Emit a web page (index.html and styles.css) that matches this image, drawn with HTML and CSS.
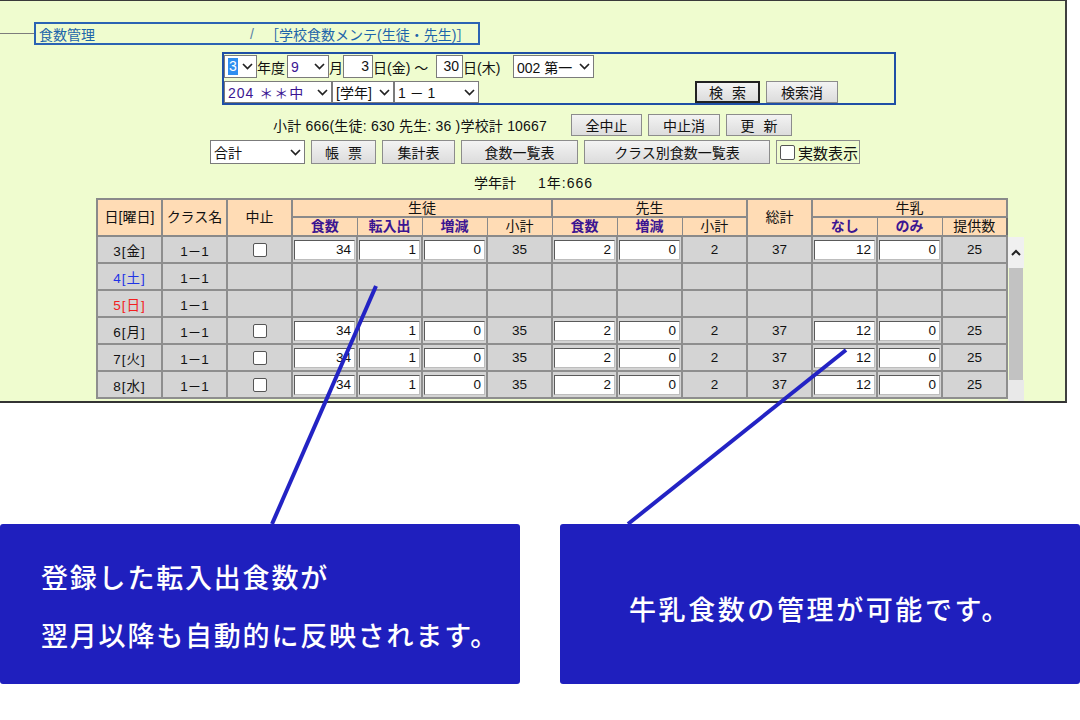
FILE: index.html
```html
<!DOCTYPE html>
<html lang="ja">
<head>
<meta charset="utf-8">
<title>食数管理</title>
<link rel="stylesheet" href="styles.css">
</head>
<body>
<div class="screen">
  <div class="crumb-row">
    <span class="crumb-line"></span>
    <div class="crumb"><span class="crumb-main">食数管理</span><span class="crumb-sep">/</span><span>［学校食数メンテ(生徒・先生)］</span></div>
  </div>

  <div class="search">
    <div class="srow srow1">
      <span class="sel w33"><span class="hl">3</span><svg viewBox="0 0 11 7"><path d="M1 1 L5.5 5.5 L10 1" /></svg></span>
      <span class="lbl w30">年度</span>
      <span class="sel w42 purple"><span>9</span><svg viewBox="0 0 11 7"><path d="M1 1 L5.5 5.5 L10 1" /></svg></span>
      <span class="lbl w14">月</span>
      <span class="inp w30">3</span>
      <span class="lbl w63">日(金) ～</span>
      <span class="inp w27">30</span>
      <span class="lbl w50">日(木)</span>
      <span class="sel w81"><span>002 第一</span><svg viewBox="0 0 11 7"><path d="M1 1 L5.5 5.5 L10 1" /></svg></span>
    </div>
    <div class="srow srow2">
      <span class="sel w108 purple"><span class="wide">204 ＊＊中</span><svg viewBox="0 0 11 7"><path d="M1 1 L5.5 5.5 L10 1" /></svg></span>
      <span class="sel w62"><span>[学年]</span><svg viewBox="0 0 11 7"><path d="M1 1 L5.5 5.5 L10 1" /></svg></span>
      <span class="sel w85"><span>1 － 1</span><svg viewBox="0 0 11 7"><path d="M1 1 L5.5 5.5 L10 1" /></svg></span>
      <span class="btn btn-focus w65 ml216 spaced">検 索</span>
      <span class="btn w72 ml6">検索消</span>
    </div>
  </div>

  <div class="row3">
    <span class="total">小計 666(生徒: 630 先生: 36 )学校計 10667</span>
    <span class="btn w71">全中止</span>
    <span class="btn w72">中止消</span>
    <span class="btn w66 spaced">更 新</span>
  </div>

  <div class="row4">
    <span class="sel w95 tall"><span>合計</span><svg viewBox="0 0 11 7"><path d="M1 1 L5.5 5.5 L10 1" /></svg></span>
    <span class="btn w65 spaced">帳 票</span>
    <span class="btn w73">集計表</span>
    <span class="btn w117">食数一覧表</span>
    <span class="btn w186">クラス別食数一覧表</span>
    <span class="chkbox"><span class="box"></span>実数表示</span>
  </div>

  <div class="grade"><span>学年計</span><span class="num">1年:666</span></div>

  <div class="grid-wrap">
    <table class="grid">
      <colgroup>
        <col><col><col><col><col><col><col><col><col><col><col><col><col><col>
      </colgroup>
      <thead>
        <tr class="h1">
          <th rowspan="2">日[曜日]</th>
          <th rowspan="2">クラス名</th>
          <th rowspan="2">中止</th>
          <th colspan="4" class="grp">生徒</th>
          <th colspan="3" class="grp">先生</th>
          <th rowspan="2">総計</th>
          <th colspan="3" class="grp">牛乳</th>
        </tr>
        <tr class="h2">
          <th class="sub em">食数</th>
          <th class="sub em">転入出</th>
          <th class="sub em">増減</th>
          <th class="sub">小計</th>
          <th class="sub em">食数</th>
          <th class="sub em">増減</th>
          <th class="sub">小計</th>
          <th class="sub em">なし</th>
          <th class="sub em">のみ</th>
          <th class="sub">提供数</th>
        </tr>
      </thead>
      <tbody>
        <tr>
          <td class="day">3[金]</td><td>1－1</td><td><span class="cb"></span></td>
          <td><span class="in">34</span></td><td><span class="in">1</span></td><td><span class="in">0</span></td><td>35</td>
          <td><span class="in">2</span></td><td><span class="in">0</span></td><td>2</td>
          <td>37</td>
          <td><span class="in">12</span></td><td><span class="in">0</span></td><td>25</td>
        </tr>
        <tr>
          <td class="day sat">4[土]</td><td>1－1</td><td></td>
          <td></td><td></td><td></td><td></td><td></td><td></td><td></td><td></td><td></td><td></td><td></td>
        </tr>
        <tr>
          <td class="day sun">5[日]</td><td>1－1</td><td></td>
          <td></td><td></td><td></td><td></td><td></td><td></td><td></td><td></td><td></td><td></td><td></td>
        </tr>
        <tr>
          <td class="day">6[月]</td><td>1－1</td><td><span class="cb"></span></td>
          <td><span class="in">34</span></td><td><span class="in">1</span></td><td><span class="in">0</span></td><td>35</td>
          <td><span class="in">2</span></td><td><span class="in">0</span></td><td>2</td>
          <td>37</td>
          <td><span class="in">12</span></td><td><span class="in">0</span></td><td>25</td>
        </tr>
        <tr>
          <td class="day">7[火]</td><td>1－1</td><td><span class="cb"></span></td>
          <td><span class="in">34</span></td><td><span class="in">1</span></td><td><span class="in">0</span></td><td>35</td>
          <td><span class="in">2</span></td><td><span class="in">0</span></td><td>2</td>
          <td>37</td>
          <td><span class="in">12</span></td><td><span class="in">0</span></td><td>25</td>
        </tr>
        <tr>
          <td class="day">8[水]</td><td>1－1</td><td><span class="cb"></span></td>
          <td><span class="in">34</span></td><td><span class="in">1</span></td><td><span class="in">0</span></td><td>35</td>
          <td><span class="in">2</span></td><td><span class="in">0</span></td><td>2</td>
          <td>37</td>
          <td><span class="in">12</span></td><td><span class="in">0</span></td><td>25</td>
        </tr>
      </tbody>
    </table>
    <div class="scrollbar">
      <div class="sb-up"><svg viewBox="0 0 10 7"><path d="M1 6 L5 2 L9 6" /></svg></div>
      <div class="sb-thumb"></div>
      <div class="sb-rest"></div>
    </div>
  </div>
</div>

<div class="callouts">
  <div class="callout c1">
    <p>登録した転入出食数が</p>
    <p>翌月以降も自動的に反映されます。</p>
  </div>
  <div class="callout c2">
    <p>牛乳食数の管理が可能です。</p>
  </div>
</div>

<svg class="pointers" viewBox="0 0 1080 720" width="1080" height="720">
  <line x1="376" y1="286" x2="272" y2="524" />
  <line x1="846" y1="350" x2="628" y2="524" />
</svg>
</body>
</html>
```

FILE: styles.css
```css
html, body {
  margin: 0;
  padding: 0;
}
body {
  width: 1080px;
  height: 720px;
  background: #ffffff;
  position: relative;
  overflow: hidden;
  font-family: "Liberation Sans", "Noto Sans CJK JP", sans-serif;
  font-size: 13.5px;
  color: #111;
}

.screen {
  width: 1067px;
  height: 403px;
  box-sizing: border-box;
  background: #effccf;
  border-top: 1px solid #3a3a3a;
  border-right: 2px solid #3f3f3f;
  border-bottom: 2px solid #333;
  overflow: hidden;
  padding-top: 21px;
}

/* breadcrumb */
.crumb-row {
  display: flex;
  align-items: center;
  height: 23px;
}
.crumb-line {
  width: 34px;
  height: 1px;
  background: #7c7c7c;
}
.crumb {
  width: 446px;
  height: 23px;
  box-sizing: border-box;
  border: 2px solid #2b63b3;
  display: flex;
  align-items: center;
  padding-left: 3px;
  color: #1d65aa;
  font-size: 14px;
  white-space: nowrap;
}
.crumb-main { width: 211px; }
.crumb-sep { width: 15px; color: #5a7fa8; }

/* search box */
.search {
  margin: 7px 0 0 222px;
  width: 674px;
  height: 53px;
  box-sizing: border-box;
  border: 2px solid #1f4fa6;
  padding-top: 1px;
}
.srow {
  display: flex;
  align-items: center;
  white-space: nowrap;
  font-size: 14px;
}
.srow1 { height: 23px; }
.srow2 { height: 22px; margin-top: 3px; }

.sel {
  display: inline-flex;
  align-items: center;
  justify-content: space-between;
  box-sizing: border-box;
  height: 23px;
  background: #fff;
  border: 1px solid #7b7b7b;
  padding: 0 3px 0 3px;
  white-space: nowrap;
  flex: none;
}
.srow2 .sel { height: 22px; }
.sel svg {
  width: 11px;
  height: 7px;
  flex: none;
}
.sel svg path {
  fill: none;
  stroke: #222;
  stroke-width: 1.7;
}
.sel .hl {
  background: #2f8ef0;
  color: #fff;
  padding: 0 1px;
  line-height: 17px;
}
.sel .wide { letter-spacing: 1px; }
.purple { color: #3b1592; }

.lbl {
  display: inline-block;
  flex: none;
}
.inp {
  display: inline-block;
  box-sizing: border-box;
  height: 23px;
  line-height: 21px;
  background: #fff;
  border: 1px solid #7b7b7b;
  text-align: right;
  padding-right: 3px;
  flex: none;
}

.w14 { width: 14px; }
.w27 { width: 27px; }
.w30 { width: 30px; }
.w33 { width: 33px; }
.w42 { width: 42px; }
.w50 { width: 50px; }
.w62 { width: 62px; }
.w63 { width: 63px; }
.w65 { width: 65px; }
.w66 { width: 66px; }
.w71 { width: 71px; }
.w72 { width: 72px; }
.w73 { width: 73px; }
.w81 { width: 81px; }
.w85 { width: 85px; }
.w95 { width: 95px; }
.w108 { width: 108px; }
.w117 { width: 117px; }
.w186 { width: 186px; }
.ml216 { margin-left: 216px; }
.ml6 { margin-left: 6px; }

/* buttons */
.btn {
  display: inline-flex;
  align-items: center;
  justify-content: center;
  box-sizing: border-box;
  height: 22px;
  background: linear-gradient(#f3f3f3, #dcdcdc);
  border: 1px solid #8c8c8c;
  color: #111;
  white-space: pre;
  flex: none;
  font-size: 14px;
}
.btn.spaced { word-spacing: 5px; }
.btn-focus {
  border: 2px solid #222;
}

.row3 {
  display: flex;
  align-items: center;
  height: 22px;
  margin: 9px 0 0 273px;
  gap: 6px;
}
.total {
  width: 292px;
  white-space: nowrap;
  font-size: 14px;
  letter-spacing: 0.2px;
}

.row4 {
  display: flex;
  align-items: center;
  height: 24px;
  margin: 4px 0 0 210px;
  gap: 6px;
}
.row4 .btn { height: 24px; }
.sel.tall { height: 24px; font-size: 14px; }
.chkbox {
  display: inline-flex;
  align-items: center;
  box-sizing: border-box;
  width: 84px;
  height: 24px;
  border: 1px solid #8c8c8c;
  padding-left: 3px;
  gap: 3px;
  font-size: 15px;
  white-space: nowrap;
}
.chkbox .box {
  width: 15px;
  height: 15px;
  box-sizing: border-box;
  background: #fff;
  border: 1px solid #555;
  border-radius: 2px;
}

.grade {
  display: flex;
  gap: 22px;
  height: 16px;
  line-height: 16px;
  margin: 11px 0 0 474px;
  font-size: 14px;
}
.grade .num { letter-spacing: 1px; }

/* table */
.grid-wrap {
  display: flex;
  align-items: flex-start;
  margin: 7px 0 0 96px;
}
.grid {
  width: 910px;
  table-layout: fixed;
  border-collapse: collapse;
  border: 2px solid #6e6e6e;
}
.grid col { width: 65px; }
.grid th {
  background: #ffdcb5;
  font-weight: normal;
  border: 2px solid #8a8a8a;
  padding: 0;
  text-align: center;
  white-space: nowrap;
  line-height: 15px;
  font-size: 14px;
}
.grid .h1 { height: 18px; }
.grid .h2 { height: 19px; }
.grid th.grp { border-bottom: 1px solid #8a8a8a; }
.grid th.sub { border-left-width: 1px; border-right-width: 1px; }
.grid th.em {
  color: #3b1592;
  font-weight: bold;
}
.grid td {
  background: #d4d4d4;
  border: 2px solid #8e8e8e;
  padding: 0;
  height: 23px;
  text-align: center;
  white-space: nowrap;
}
.grid tbody tr { height: 27px; }
.grid td.day { letter-spacing: 1px; }
.grid td.sat { color: #1f33e6; }
.grid td.sun { color: #f22020; }
.in {
  display: block;
  box-sizing: border-box;
  width: 61px;
  height: 20px;
  line-height: 18px;
  margin: 0 auto;
  background: #fff;
  border: 1px solid;
  border-color: #5a5a5a #bdbdbd #bdbdbd #5a5a5a;
  text-align: right;
  padding-right: 3px;
}
.cb {
  display: block;
  width: 14px;
  height: 14px;
  margin: 0 auto;
  box-sizing: border-box;
  background: #fff;
  border: 1px solid #555;
  border-radius: 2px;
}

/* fake scrollbar */
.scrollbar {
  width: 16px;
  margin-top: 39px;
  display: flex;
  flex-direction: column;
}
.sb-up {
  height: 31px;
  background: #f0f0f0;
  display: flex;
  align-items: center;
  justify-content: center;
}
.sb-up svg {
  width: 10px;
  height: 7px;
}
.sb-up svg path {
  fill: none;
  stroke: #222;
  stroke-width: 2;
}
.sb-thumb {
  height: 112px;
  background: #c2c2c2;
  margin: 0 1px;
}
.sb-rest {
  height: 60px;
  background: #e9e9e9;
}

/* callouts */
.callouts {
  display: flex;
  gap: 40px;
  margin-top: 121px;
}
.callout {
  width: 520px;
  height: 160px;
  box-sizing: border-box;
  background: #1f1fbe;
  border-radius: 3px;
  color: #fff;
  font-family: "Noto Sans CJK JP", sans-serif;
  font-size: 27px;
  font-weight: 500;
  letter-spacing: 1.8px;
}
.callout p { margin: 0; }
.c1 {
  padding: 24px 0 0 41px;
  line-height: 58px;
}
.c2 {
  display: flex;
  align-items: center;
  justify-content: center;
  padding-top: 8px;
  letter-spacing: 2.6px;
}

.pointers {
  position: absolute;
  left: 0;
  top: 0;
  pointer-events: none;
}
.pointers line {
  stroke: #2323c4;
  stroke-width: 4;
}
```
